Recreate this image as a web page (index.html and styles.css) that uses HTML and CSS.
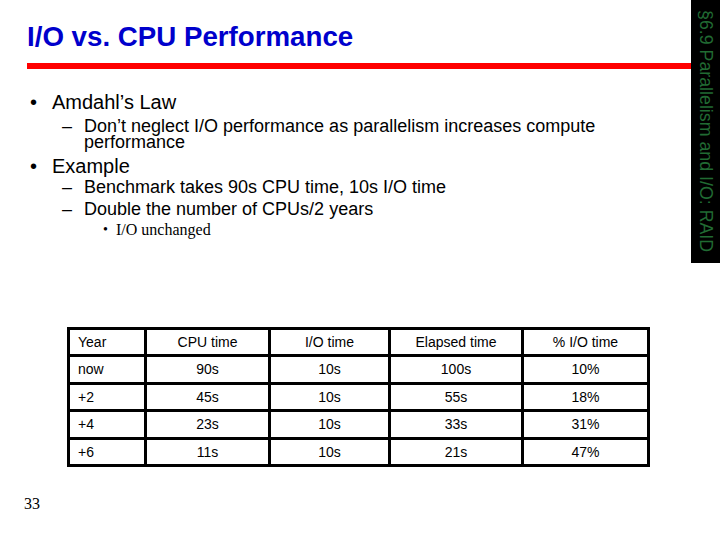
FILE: index.html
```html
<!DOCTYPE html>
<html>
<head>
<meta charset="utf-8">
<link rel="stylesheet" href="styles.css">
</head>
<body>
<div class="slide">
  <div class="main">
    <h1 class="title">I/O vs. CPU Performance</h1>
    <div class="rule"></div>
    <div class="item l1 first-l1"><span class="mark">•</span><span class="txt">Amdahl’s Law</span></div>
    <div class="item l2 first-l2"><span class="mark">–</span><span class="txt">Don’t neglect I/O performance as parallelism increases compute performance</span></div>
    <div class="item l1 next-l1"><span class="mark">•</span><span class="txt">Example</span></div>
    <div class="item l2 after-l1"><span class="mark">–</span><span class="txt">Benchmark takes 90s CPU time, 10s I/O time</span></div>
    <div class="item l2 next-l2"><span class="mark">–</span><span class="txt">Double the number of CPUs/2 years</span></div>
    <div class="item l3"><span class="mark">•</span><span class="txt">I/O unchanged</span></div>
    <table class="perf">
      <colgroup>
        <col class="c1"><col class="c2"><col class="c3"><col class="c4"><col class="c5">
      </colgroup>
      <tr class="hdr"><td class="left">Year</td><td>CPU time</td><td>I/O time</td><td>Elapsed time</td><td>% I/O time</td></tr>
      <tr><td class="left">now</td><td>90s</td><td>10s</td><td>100s</td><td>10%</td></tr>
      <tr><td class="left">+2</td><td>45s</td><td>10s</td><td>55s</td><td>18%</td></tr>
      <tr><td class="left">+4</td><td>23s</td><td>10s</td><td>33s</td><td>31%</td></tr>
      <tr><td class="left">+6</td><td>11s</td><td>10s</td><td>21s</td><td>47%</td></tr>
    </table>
    <div class="pagenum">33</div>
  </div>
  <div class="side"><span class="side-text">§6.9 Parallelism and I/O: RAID</span></div>
</div>
</body>
</html>
```
FILE: styles.css
```css
html, body {
  margin: 0;
  padding: 0;
  background: #ffffff;
}
.slide {
  width: 720px;
  height: 540px;
  display: flex;
  align-items: flex-start;
  overflow: hidden;
}
.main {
  flex: 1;
  padding-left: 27px;
  font-family: "Liberation Sans", Arial, sans-serif;
  color: #000;
}
.title {
  margin: 21px 0 0;
  font-size: 27.7px;
  line-height: 32px;
  font-weight: bold;
  color: #0000cc;
}
.rule {
  margin-top: 10px;
  height: 6px;
  background: #ff0000;
}
.item {
  display: flex;
}
.l1 {
  font-size: 20px;
  line-height: 24px;
  padding-left: 3px;
}
.l1 .mark { width: 22px; flex: none; }
.first-l1 { margin-top: 21px; }
.next-l1 { margin-top: 4px; }
.l2 {
  font-size: 18px;
  line-height: 16px;
  padding-left: 35px;
  width: 540px;
}
.l2 .mark { width: 22px; flex: none; }
.first-l2 { margin-top: 4px; }
.after-l1 { margin-top: 1px; }
.next-l2 { margin-top: 6px; }
.l3 {
  font-family: "Liberation Serif", "Times New Roman", serif;
  font-size: 16px;
  line-height: 16px;
  padding-left: 76px;
  margin-top: 5px;
}
.l3 .mark { width: 13px; flex: none; font-size: 14px; }
.perf {
  margin-top: 89px;
  margin-left: 40px;
  border-collapse: collapse;
  table-layout: fixed;
  width: 583px;
  font-size: 14px;
}
.c1 { width: 77px; }
.c2 { width: 124px; }
.c3 { width: 120px; }
.c4 { width: 133px; }
.c5 { width: 126px; }
.perf td {
  border: 3px solid #000;
  height: 24.5px;
  padding: 0;
  text-align: center;
  vertical-align: middle;
}
.perf .hdr td { height: 24px; }
.perf td.left {
  text-align: left;
  padding-left: 8px;
}
.pagenum {
  margin-top: 28px;
  margin-left: -3px;
  font-family: "Liberation Serif", "Times New Roman", serif;
  font-size: 16px;
  line-height: 18px;
}
.side {
  width: 29px;
  height: 263px;
  flex: none;
  background: #000;
  display: flex;
  align-items: center;
  justify-content: center;
}
.side-text {
  writing-mode: vertical-rl;
  text-orientation: sideways;
  font-family: "Liberation Sans", Arial, sans-serif;
  font-size: 17.8px;
  line-height: 20px;
  color: #216b33;
  white-space: nowrap;
}
```
